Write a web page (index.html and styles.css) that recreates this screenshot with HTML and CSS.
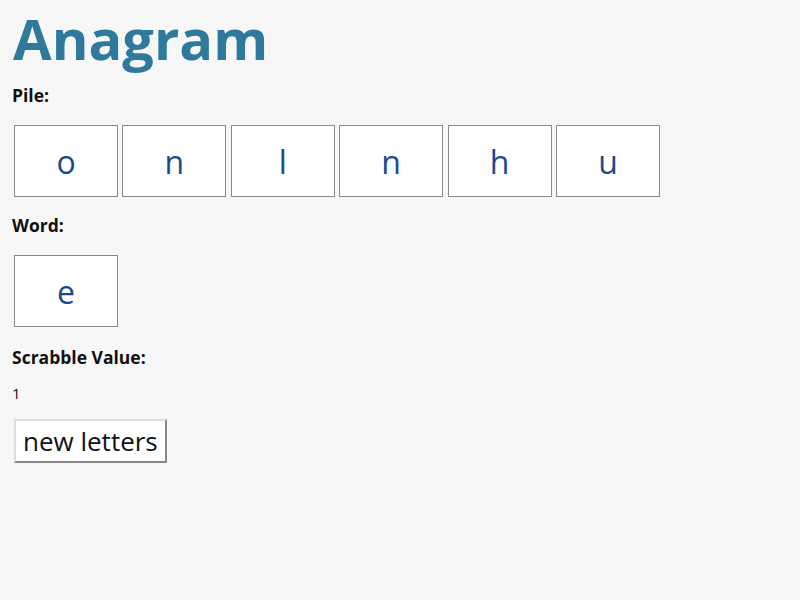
FILE: index.html
```html
<!DOCTYPE html>
<html>
<head>
<meta charset="utf-8">
<link rel="stylesheet" href="styles.css">
</head>
<body>
<h1 class="title">Anagram</h1>
<div class="label">Pile:</div>
<div class="tiles">
  <div class="tile">o</div>
  <div class="tile">n</div>
  <div class="tile">l</div>
  <div class="tile">n</div>
  <div class="tile">h</div>
  <div class="tile">u</div>
</div>
<div class="label">Word:</div>
<div class="tiles">
  <div class="tile">e</div>
</div>
<div class="label label-score">Scrabble Value:</div>
<div class="value">1</div>
<button class="btn">new letters</button>
</body>
</html>
```
FILE: styles.css
```css
html, body {
  margin: 0;
  background: #f7f7f7;
}
body {
  padding: 0 12px;
  font-family: "Open Sans", sans-serif;
  color: #111;
}
.title {
  margin: 0;
  padding: 3px 0 0 1px;
  font-size: 56px;
  font-weight: 700;
  line-height: 71px;
  color: #2f7a9c;
}
.label {
  font-size: 17.5px;
  font-weight: 700;
  line-height: 24px;
  margin-top: 9px;
}
.tiles + .label {
  margin-top: 16px;
}
.tiles + .label-score {
  margin-top: 18px;
}
.tiles {
  display: flex;
  gap: 4.4px;
  margin: 18px 0 0 2px;
}
.tile {
  width: 102px;
  height: 70px;
  border: 1px solid #8a8a8a;
  background: #fff;
  color: #1b4a8c;
  font-size: 32px;
  display: flex;
  align-items: center;
  justify-content: center;
}
.value {
  font-size: 15px;
  line-height: 20px;
  margin-top: 14px;
}
.btn {
  display: block;
  margin: 16px 0 0 2px;
  font-family: "Open Sans", sans-serif;
  font-size: 26px;
  line-height: 36px;
  padding: 2px 7px;
  background: #fff;
  border: 2px outset #ddd;
  color: #111;
}
```
